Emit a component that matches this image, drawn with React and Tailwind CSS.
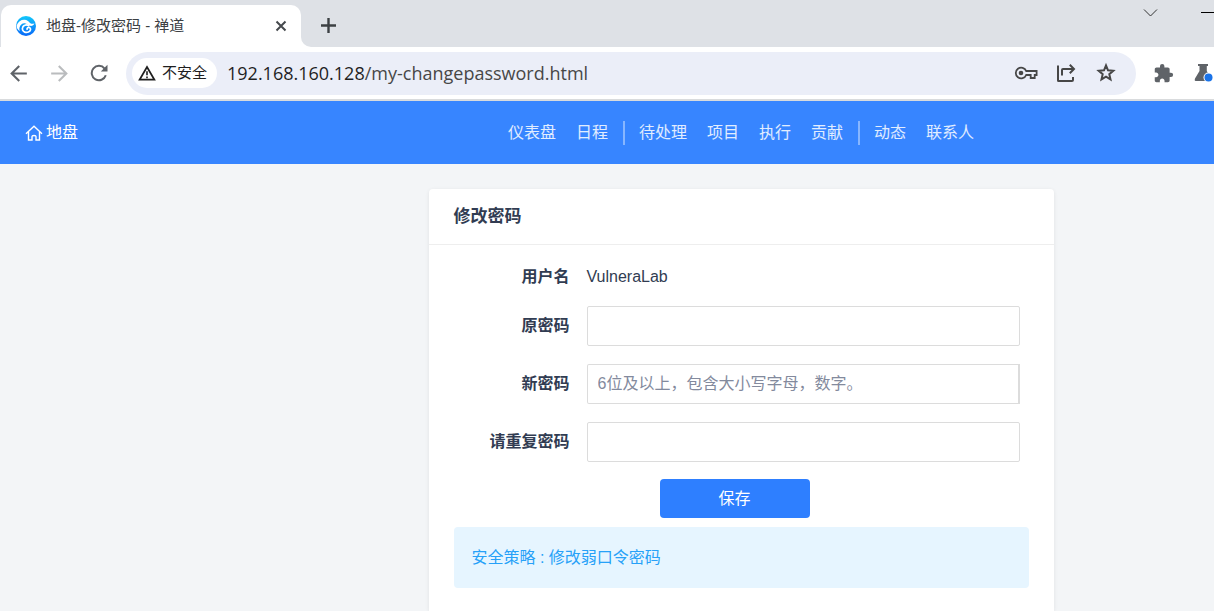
import React from "react";
import { MdArrowBack, MdArrowForward, MdExtension } from "react-icons/md";

const SiteLogo = () => (
  <svg viewBox="0 0 20 20" className="size-5 shrink-0" aria-hidden="true">
    <defs>
      <linearGradient id="logo" x1="0" y1="0" x2="0" y2="1">
        <stop offset="0" stopColor="#12c8fb" />
        <stop offset="1" stopColor="#0868f8" />
      </linearGradient>
    </defs>
    <circle cx="10" cy="10" r="10" fill="url(#logo)" />
    <path
      d="M0.6 9.6C2.2 5.4 5.2 3.6 8.6 3.800c2.400.2 3.800 1.400 4.900 2.600 1.200 1.300 2.900 1.800 4.900.8-.6 2-2.400 3-4.400 2.600C12 9.400 11 7.400 8.800 7.200 6.200 7 4.200 8.800 3.600 11.200c-.4 1.500-.2 2.800.2 4C1.800 14 .4 12 .6 9.600Z"
      fill="#fff"
    />
    <path
      d="M12.600 9.600c-2-1.200-4.600-.6-5.700 1.200-1.200 2.100-.2 4.500 1.900 5.300 2.400.9 5.200-.2 5.700-2.300.3-1.500-.8-2.500-2.100-2.300-1 .2-1.500 1-1.300 1.800"
      fill="none"
      stroke="#fff"
      strokeWidth="1.700"
      strokeLinecap="round"
    />
  </svg>
);

const ReloadIcon = () => (
  <svg viewBox="0 0 18 18" className="size-[18px]" fill="none" aria-hidden="true">
    <path d="M15.800 11.300A7.200 7.200 0 1 1 14.600 4.600" stroke="#5f6368" strokeWidth="2" />
    <path d="M17.500 0.800V7.500H10.800Z" fill="#5f6368" />
  </svg>
);

const WarningIcon = () => (
  <svg viewBox="0 0 18 16" className="h-4 w-[18px]" fill="none" aria-hidden="true">
    <path d="M9 2L16.400 14.700H1.600Z" stroke="#1f1f1f" strokeWidth="1.700" />
    <path d="M9 6.200v4.100M9 11.500v1.700" stroke="#1f1f1f" strokeWidth="1.600" />
  </svg>
);

const KeyIcon = () => (
  <svg viewBox="0 0 24 14" className="h-[14px] w-6" fill="none" stroke="#474747" aria-hidden="true">
    <path
      d="M12.200 5H22.600V9H20.700V12H16.700V9H12.200A5.400 5.400 0 1 1 12.200 5Z"
      strokeWidth="1.800"
    />
    <circle cx="7" cy="7" r="2.300" fill="#474747" stroke="none" />
  </svg>
);

const ShareIcon = () => (
  <svg viewBox="0 0 20 20" className="size-5" fill="none" stroke="#474747" strokeWidth="2" aria-hidden="true">
    <path d="M2 2.500V17.500Q2 18 2.500 18H16Q17 18 17 17V14" />
    <path d="M6 12.500V7Q6 6 7 6H17" />
    <path d="M13.800 1.700L18 6L13.800 10.300" />
  </svg>
);

const StarIcon = () => (
  <svg viewBox="0 0 24 24" className="size-6" fill="none" stroke="#474747" strokeWidth="2" aria-hidden="true">
    <path d="M12 4.400L14 9.300L19.300 9.750L15.300 13.200L16.500 18.400L12 15.700L7.500 18.400L8.700 13.200L4.700 9.750L10 9.300Z" />
  </svg>
);

const FlaskIcon = () => (
  <svg viewBox="0 0 20 20" className="size-5 shrink-0" aria-hidden="true">
    <path d="M4 1H14V3H12.800V8L18 18H1.500Q0 17.500 1 15.500L5.500 8V3H4Z" fill="#5f6368" />
    <circle cx="14.500" cy="14.500" r="5" fill="#fff" />
    <circle cx="14.500" cy="14.500" r="4" fill="#1a73e8" />
  </svg>
);

const HomeIcon = () => (
  <svg viewBox="0 0 18 16" className="h-4 w-[18px]" fill="none" stroke="#fff" strokeWidth="1.400" aria-hidden="true">
    <path d="M1 8.700L9 1.200L17 8.700" />
    <path d="M3.500 7V15H7V11.500Q7 10.500 9 10.500T11 11.500V15H14.500V7" />
  </svg>
);

const menuGroups = [
  ["仪表盘", "日程"],
  ["待处理", "项目", "执行", "贡献"],
  ["动态", "联系人"],
];

function TabStrip() {
  return (
    <div className="flex h-[47px] bg-white">
      <div className="w-[301px] shrink-0 bg-[#dee1e6] pt-[5px] pl-px">
        <div className="flex h-full items-center rounded-t-[10px] bg-white pr-[13px] pl-[15px]">
          <SiteLogo />
          <span className="ml-[10px] flex-1 text-[15px] whitespace-nowrap text-[#3c4043]">
            地盘-修改密码 - 禅道
          </span>
          <button type="button" aria-label="关闭标签页">
            <svg viewBox="0 0 14 14" className="size-[14px]" stroke="#45494d" strokeWidth="2" aria-hidden="true">
              <path d="M2.500 2.500L11.500 11.500M11.500 2.500L2.500 11.500" />
            </svg>
          </button>
        </div>
      </div>
      <div className="flex flex-1 items-start justify-between overflow-hidden rounded-bl-[10px] bg-[#dee1e6]">
        <button type="button" aria-label="新建标签页" className="mt-[18px] ml-5">
          <svg viewBox="0 0 15 15" className="size-[15px]" stroke="#3c4043" strokeWidth="2.400" aria-hidden="true">
            <path d="M7.500 0V15M0 7.500H15" />
          </svg>
        </button>
        <div className="flex items-start">
          <button type="button" aria-label="搜索标签页" className="mt-2 mr-[43px]">
            <svg viewBox="0 0 15 10" className="h-[10px] w-[15px]" fill="none" stroke="#333" aria-hidden="true">
              <path d="M1 1.500L7.500 8L14 1.500" />
            </svg>
          </button>
          <button type="button" aria-label="最小化" className="mt-3">
            <svg viewBox="0 0 13 1" className="h-px w-[13px]" aria-hidden="true">
              <path d="M0 0H13V1H0Z" fill="#000" />
            </svg>
          </button>
        </div>
      </div>
    </div>
  );
}

function Toolbar() {
  return (
    <div className="flex h-[54px] items-center border-b-2 border-[#d9dbdd] bg-white pl-[6px]">
      <button type="button" aria-label="后退" className="text-[#5f6368]">
        <MdArrowBack className="size-[25px]" />
      </button>
      <button type="button" aria-label="前进" className="ml-4 text-[#babcbe]">
        <MdArrowForward className="size-[25px]" />
      </button>
      <button type="button" aria-label="重新加载" className="ml-[18px]">
        <ReloadIcon />
      </button>
      <div className="ml-[18px] flex h-[43px] min-w-0 flex-1 items-center rounded-full bg-[#ebeef8] pr-[18px] pl-[6px]">
        <button
          type="button"
          className="flex h-[30px] shrink-0 items-center gap-[6px] rounded-full bg-white pr-[10px] pl-[6px] text-[15px] text-[#1f1f1f]"
        >
          <WarningIcon />
          不安全
        </button>
        <div className="ml-[10px] min-w-0 flex-1 truncate font-['Open_Sans','Noto_Sans',sans-serif] text-[18px] text-[#474747]">
          <span className="text-[#1f1f1f]">192.168.160.128</span>/my-changepassword.html
        </div>
        <div className="flex items-center gap-[18px]">
          <button type="button" aria-label="密码"><KeyIcon /></button>
          <button type="button" aria-label="分享"><ShareIcon /></button>
          <button type="button" aria-label="收藏"><StarIcon /></button>
        </div>
      </div>
      <button type="button" aria-label="扩展程序" className="ml-[17px] text-[#5f6368]">
        <MdExtension className="size-[21px]" />
      </button>
      <button type="button" aria-label="实验" className="ml-5">
        <FlaskIcon />
      </button>
    </div>
  );
}

function Field({ id, label, placeholder, className }) {
  return (
    <>
      <label htmlFor={id} className="text-right font-bold">{label}</label>
      <input
        id={id}
        type="password"
        placeholder={placeholder}
        className={`h-10 w-full border border-[#dcdcdc] bg-white px-[10px] outline-none placeholder:text-[#838a9d] ${className}`}
      />
    </>
  );
}

export default function App() {
  return (
    <div className="flex min-h-screen flex-col overflow-hidden bg-[#f3f5f7] font-['Liberation_Sans','Noto_Sans_CJK_SC',sans-serif] text-base text-[#313c52]">
      <TabStrip />
      <Toolbar />
      <header className="flex h-[63px] items-center bg-[#3785ff] text-white">
        <a href="#home" className="flex w-[268px] shrink-0 items-center gap-[3px] pl-[25px]">
          <HomeIcon />
          地盘
        </a>
        <nav className="flex flex-1 items-center justify-center text-white/85">
          {menuGroups.map((group, index) => (
            <div
              key={group[0]}
              className={
                index === 0
                  ? "flex h-6 items-center"
                  : "ml-[5px] flex h-6 items-center border-l-2 border-white/40 pl-1"
              }
            >
              {group.map((item) => (
                <a key={item} href={`#${item}`} className="px-[10px] whitespace-nowrap">{item}</a>
              ))}
            </div>
          ))}
        </nav>
      </header>
      <main className="flex flex-1 justify-center pt-[25px] pl-[268px]">
        <section className="w-full max-w-[625px] rounded-t bg-white pb-[23px] shadow-[0_1px_4px_rgba(0,0,0,0.08)]">
          <h1 className="flex h-14 items-center border-b border-[#eeeeee] px-[25px] text-[17px] font-bold">
            修改密码
          </h1>
          <form onSubmit={(e) => e.preventDefault()} className="px-[25px] pt-[21px]">
            <div className="grid grid-cols-[116px_1fr] items-center gap-x-[17px] gap-y-[18px] pr-[9px]">
              <span className="text-right leading-[22px] font-bold">用户名</span>
              <span className="leading-[22px]">VulneraLab</span>
              <Field id="old" label="原密码" className="rounded-[2px]" />
              <Field id="new" label="新密码" placeholder="6位及以上，包含大小写字母，数字。" className="rounded-l-[2px] border-r-2" />
              <Field id="repeat" label="请重复密码" className="rounded-[2px]" />
            </div>
            <div className="flex justify-center pt-[17px] pr-[13px] pb-[9px]">
              <button type="submit" className="h-[39px] w-[150px] rounded bg-[#2e7fff] text-white">保存</button>
            </div>
            <p className="flex h-[61px] items-center rounded bg-[#e6f5ff] px-[18px] text-[#27a1f8]">
              安全策略 : 修改弱口令密码
            </p>
          </form>
        </section>
      </main>
    </div>
  );
}
